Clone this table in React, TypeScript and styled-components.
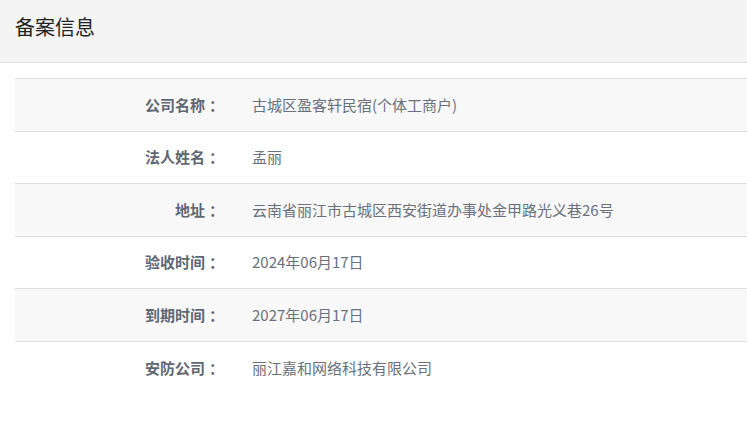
import React from 'react';
import styled, { createGlobalStyle } from 'styled-components';

const GlobalStyle = createGlobalStyle`
    body {
        margin: 0;
        background: #ffffff;
        font-family: "Noto Sans CJK SC", "Noto Sans", "Liberation Sans", sans-serif;
        text-spacing-trim: space-all;
    }
`;

interface Interface_Record {
    label: string;
    value: string;
}

const records: Interface_Record[] = [
    { label: '公司名称', value: '古城区盈客轩民宿(个体工商户)' },
    { label: '法人姓名', value: '孟丽' },
    { label: '地址', value: '云南省丽江市古城区西安街道办事处金甲路光义巷26号' },
    { label: '验收时间', value: '2024年06月17日' },
    { label: '到期时间', value: '2027年06月17日' },
    { label: '安防公司', value: '丽江嘉和网络科技有限公司' },
];

const App = () => {
    return (
        <Div_Page>
            <GlobalStyle />
            <Div_Header>
                <H_Title>备案信息</H_Title>
            </Div_Header>

            <Div_Table>
                {records.map((item, index) => (
                    <Div_Row key={index} _striped={index % 2 === 0} _last={index === records.length - 1}>
                        <Label_Key>
                            {item.label}
                            <Span_Colon>：</Span_Colon>
                        </Label_Key>
                        <Span_Value>{item.value}</Span_Value>
                    </Div_Row>
                ))}
            </Div_Table>
        </Div_Page>
    );
};

export default App;

// CSS
const Div_Page = styled.div`
    width: 747px;
    min-height: 425px;
`;

const Div_Header = styled.div`
    height: 62px;
    background-color: #f4f4f4;
    border-bottom: 1px solid #dddddd;
    display: flex;
    align-items: center;
    padding-left: 15px;
`;

const H_Title = styled.h1`
    margin: 0 0 10px 0;
    font-size: 20px;
    font-weight: normal;
    color: #222222;
`;

const Div_Table = styled.div`
    margin: 15px 0 0 15px;
    border-top: 1px solid #dfdfdf;
`;

const Div_Row = styled.div<{ _striped: boolean; _last: boolean }>`
    display: grid;
    grid-template-columns: 205px 1fr;
    column-gap: 32px;
    align-items: center;
    box-sizing: border-box;
    height: 52.5px;
    padding-bottom: 1px;
    background-color: ${(p) => (p._striped ? '#f8f8f8' : '#ffffff')};
    border-bottom: ${(p) => (p._last ? 'none' : '1px solid #dfdfdf')};
    font-size: 15px;
`;

const Label_Key = styled.label`
    display: flex;
    justify-content: flex-end;
    font-weight: bold;
    color: #5f6773;
`;

const Span_Colon = styled.span`
    display: inline-block;
    box-sizing: border-box;
    width: 15px;
    padding-left: 4px;
    text-align: center;
`;

const Span_Value = styled.span`
    color: #6b717c;
`;
